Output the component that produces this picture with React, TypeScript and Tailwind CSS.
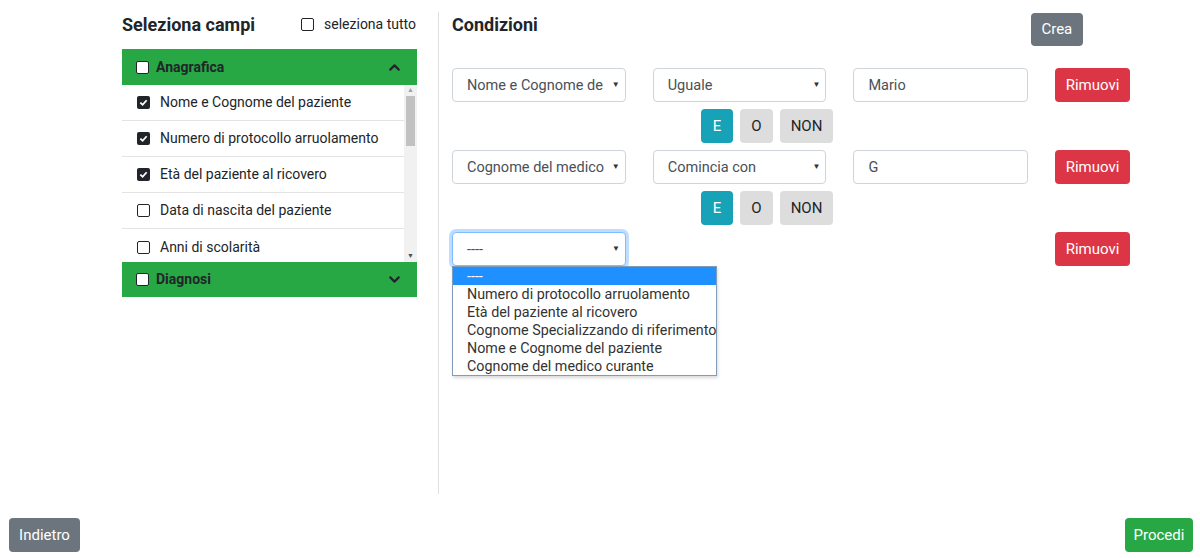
import { ChevronDown, ChevronUp } from 'lucide-react';

const font = { fontFamily: 'Roboto, "Liberation Sans", sans-serif' };

function Box({ checked = false }: { checked?: boolean }) {
    return checked ? (
        <span className="w-[13px] h-[13px] rounded-[2px] bg-[#212529] flex items-center justify-center shrink-0">
            <svg width="9" height="9" viewBox="0 0 10 10">
                <path d="M1.5 5.2 L4 7.5 L8.5 2.5" stroke="white" strokeWidth="2" fill="none" />
            </svg>
        </span>
    ) : (
        <span className="w-[13px] h-[13px] rounded-[2px] border-[1.5px] border-[#212529] bg-white shrink-0" />
    );
}

const fields = [
    { label: 'Nome e Cognome del paziente', checked: true },
    { label: 'Numero di protocollo arruolamento', checked: true },
    { label: 'Età del paziente al ricovero', checked: true },
    { label: 'Data di nascita del paziente', checked: false },
    { label: 'Anni di scolarità', checked: false },
];

const options = [
    '----',
    'Numero di protocollo arruolamento',
    'Età del paziente al ricovero',
    'Cognome Specializzando di riferimento',
    'Nome e Cognome del paziente',
    'Cognome del medico curante',
];

// value is what fits in the closed select, the rest is cut by the browser
function Select({ value, focus = false }: { value: string; focus?: boolean }) {
    return (
        <div
            className={`w-[174px] h-[34px] rounded-[4px] bg-white flex items-center pl-[14px] pr-[5px] pt-[2px] text-[14.5px] text-[#495057] border ${
                focus ? 'border-[#80bdff] shadow-[0_0_0_3px_rgba(0,123,255,0.25)]' : 'border-[#ced4da]'
            }`}
        >
            <span className="flex-1 whitespace-nowrap">{value}</span>
            <span className="text-[8px] text-[#333] shrink-0 pb-[2px]">▼</span>
        </div>
    );
}

function Input({ value }: { value: string }) {
    return (
        <div className="w-[175px] h-[34px] rounded-[4px] border border-[#ced4da] bg-white flex items-center px-[14px] pt-[2px] text-[14.5px] text-[#495057]">
            {value}
        </div>
    );
}

function Remove() {
    return (
        <button className="w-[75px] h-[34px] rounded-[4px] bg-[#dc3545] text-white text-[15px]">Rimuovi</button>
    );
}

function Logic() {
    return (
        <div className="flex gap-[7px] pl-[249px] text-[15px]">
            <button className="w-[32px] h-[34px] rounded-[4px] bg-[#17a2b8] text-white">E</button>
            <button className="w-[33px] h-[34px] rounded-[4px] bg-[#dddddd] text-[#212529]">O</button>
            <button className="w-[53px] h-[34px] rounded-[4px] bg-[#dddddd] text-[#212529]">NON</button>
        </div>
    );
}

export default function App() {
    return (
        <div className="w-[1200px] h-[558px] bg-white flex flex-col text-[#212529]" style={font}>
            <div className="flex-1 flex pl-[122px] pt-[12px] pb-[24px]">
                {/* Left: field picker */}
                <div className="w-[295px]">
                    <div className="h-[24px] flex items-center justify-between">
                        <span className="text-[18px] font-bold">Seleziona campi</span>
                        <label className="flex items-center gap-[10px] text-[14px] pr-[1px]">
                            <Box />
                            seleziona tutto
                        </label>
                    </div>

                    <div className="mt-[13px]">
                        <div className="h-[36px] bg-[#28a745] flex items-center pl-[14px] pr-[14px] gap-[7px]">
                            <Box />
                            <span className="text-[14px] font-bold flex-1">Anagrafica</span>
                            <ChevronUp size={17} strokeWidth={3} />
                        </div>

                        <div className="h-[177px] flex overflow-hidden">
                            <div className="flex-1 overflow-hidden">
                                {fields.map((f, i) => (
                                    <div
                                        key={f.label}
                                        className={`h-[36px] flex items-center pl-[15px] gap-[10px] text-[14px] border-[#e3e3e3] ${
                                            i < fields.length - 1 ? 'border-b' : ''
                                        }`}
                                    >
                                        <Box checked={f.checked} />
                                        {f.label}
                                    </div>
                                ))}
                            </div>
                            {/* scrollbar */}
                            <div className="w-[13px] bg-[#f1f1f1] flex flex-col items-center">
                                <span className="h-[11px] text-[7px] leading-[11px] text-[#a3a3a3]">▲</span>
                                <div className="w-[9px] h-[50px] bg-[#c1c1c1]" />
                                <div className="flex-1" />
                                <span className="h-[11px] text-[7px] leading-[11px] text-[#505050]">▼</span>
                            </div>
                        </div>

                        <div className="h-[35px] bg-[#28a745] flex items-center pl-[14px] pr-[14px] gap-[7px]">
                            <Box />
                            <span className="text-[14px] font-bold flex-1">Diagnosi</span>
                            <ChevronDown size={17} strokeWidth={3} />
                        </div>
                    </div>
                </div>

                {/* Right: conditions */}
                <div className="ml-[21px] border-l border-[#e0e0e0] pl-[13px] w-[692px]">
                    <div className="flex items-start">
                        <span className="text-[18px] font-bold h-[24px] flex items-center">Condizioni</span>
                        <button className="ml-[493px] mt-[1px] w-[52px] h-[33px] rounded-[4px] bg-[#6c757d] text-white text-[15px]">
                            Crea
                        </button>
                    </div>

                    <div className="mt-[22px] flex flex-col gap-[7px]">
                        <div className="flex items-center gap-[27px]">
                            <Select value="Nome e Cognome de" />
                            <Select value="Uguale" />
                            <Input value="Mario" />
                            <Remove />
                        </div>
                        <Logic />
                        <div className="flex items-center gap-[27px]">
                            <Select value="Cognome del medico" />
                            <Select value="Comincia con" />
                            <Input value="G" />
                            <Remove />
                        </div>
                        <Logic />
                        <div className="flex items-center">
                            <div className="relative">
                                <Select value="----" focus />
                                <div className="absolute left-0 top-[34px] w-[265px] border border-[#7f9db9] bg-white shadow-[1px_2px_3px_rgba(0,0,0,0.15)] z-10">
                                    {options.map((o, i) => (
                                        <div
                                            key={o}
                                            className={`h-[18px] leading-[18px] pl-[14px] text-[14.3px] whitespace-nowrap ${
                                                i === 0 ? 'bg-[#1e90ff] text-white' : 'text-[#333]'
                                            }`}
                                        >
                                            {o}
                                        </div>
                                    ))}
                                </div>
                            </div>
                            <div className="ml-[429px]">
                                <Remove />
                            </div>
                        </div>
                    </div>
                </div>
            </div>

            <div className="flex justify-between pl-[9px] pr-[7px] pb-[6px]">
                <button className="w-[71px] h-[34px] rounded-[4px] bg-[#6c757d] text-white text-[15px]">Indietro</button>
                <button className="w-[68px] h-[34px] rounded-[4px] bg-[#28a745] text-white text-[15px]">Procedi</button>
            </div>
        </div>
    );
}
